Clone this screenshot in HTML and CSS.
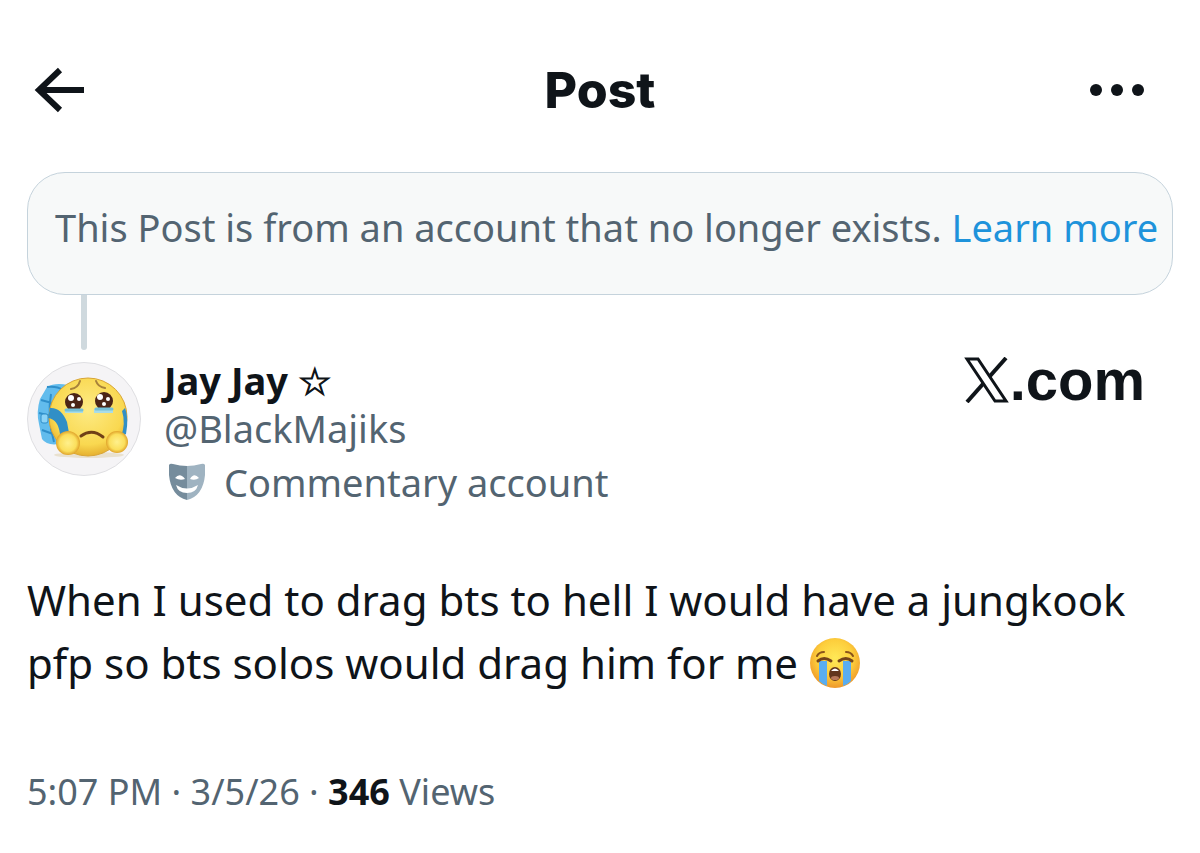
FILE: index.html
```html
<!DOCTYPE html>
<html lang="en">
<head>
  <meta charset="utf-8">
  <meta name="viewport" content="width=device-width, initial-scale=1">
  <title>Post</title>
  <link rel="stylesheet" href="styles.css">
</head>
<body>

  <header class="topbar">
    <button type="button" class="icon-btn" aria-label="Back">
      <svg width="52" height="48" viewBox="0 0 52 48" fill="none" stroke="#0f1419" stroke-width="6">
        <path d="M27 4 L6 24 L27 44 M6 24 H51"/>
      </svg>
    </button>
    <h1 class="title">Post</h1>
    <button type="button" class="icon-btn more-btn" aria-label="More">
      <svg width="56" height="48" viewBox="0 0 56 48" fill="#0f1419">
        <circle cx="7" cy="24" r="6"/>
        <circle cx="28" cy="24" r="6"/>
        <circle cx="49" cy="24" r="6"/>
      </svg>
    </button>
  </header>

  <main class="thread">
    <div class="notice">
      This Post is from an account that no longer exists. <a href="#">Learn more</a>
    </div>
    <div class="connector"></div>

    <article class="post">
      <div class="author">
        <svg class="avatar" viewBox="0 0 114 114" role="img" aria-label="Jay Jay">
          <defs>
            <radialGradient id="face" cx="50%" cy="40%" r="65%">
              <stop offset="0" stop-color="#fdeb85"/>
              <stop offset="0.7" stop-color="#f9d850"/>
              <stop offset="1" stop-color="#dfa224"/>
            </radialGradient>
            <radialGradient id="hand">
              <stop offset="0" stop-color="#fff08c"/>
              <stop offset="0.7" stop-color="#fbdf5c"/>
              <stop offset="1" stop-color="#e0a42b"/>
            </radialGradient>
          </defs>
          <circle cx="57" cy="57" r="56.5" fill="#f5f4f6" stroke="#dfdfe2"/>
          <!-- backpack -->
          <path d="M20 25 Q28 20 41 23 L32 82 Q20 84 15 77 L12 62 Q9 50 13 37 Z" fill="#62bced"/>
          <path d="M20 25 Q30 24 36 28 M14 38 L25 41 M12 51 L24 54 M15 68 L26 72 M24 32 Q20 55 27 80" fill="none" stroke="#2f8fca" stroke-width="2"/>
          <rect x="14" y="52" width="7" height="9" rx="2" fill="#8bd3f7" stroke="#2f8fca"/>
          <ellipse cx="62" cy="93" rx="35" ry="3" fill="#e9e1cf"/>
          <!-- head -->
          <ellipse cx="61" cy="55" rx="39" ry="39" fill="url(#face)" stroke="#d9a533" stroke-width="1"/>
          <path d="M23 46 Q34 45 40 60 L42 71 L33 72 Q31 57 21 56 Z" fill="#318fc6"/>
          <path d="M98 46 Q102 56 99 72 L94 75 Q99 61 95 49 Z" fill="#318fc6"/>
          <path d="M44 27 Q51 26 53 19 M69 19 Q71 25 78 26" fill="none" stroke="#a8823a" stroke-width="2" stroke-linecap="round"/>
          <path d="M38 47 H56 V51 H38 Z M67 47 H86 V51 H67 Z" fill="#a9dce6"/>
          <circle cx="47" cy="40" r="9" fill="#4b2416"/>
          <circle cx="77" cy="39" r="9" fill="#4b2416"/>
          <g fill="#fff">
            <circle cx="44" cy="36" r="3"/>
            <circle cx="52" cy="37" r="2"/>
            <circle cx="46" cy="43" r="2"/>
            <circle cx="73" cy="35" r="3"/>
            <circle cx="81" cy="37" r="2"/>
            <circle cx="77" cy="42" r="2"/>
          </g>
          <path d="M39 48 H55 M69 47 H85" fill="none" stroke="#74bfd8" stroke-width="3" stroke-linecap="round"/>
          <path d="M54 74 Q65 66 76 75" fill="none" stroke="#704017" stroke-width="3" stroke-linecap="round"/>
          <circle cx="41" cy="81" r="12" fill="url(#hand)"/>
          <circle cx="90" cy="80" r="11" fill="url(#hand)"/>
        </svg>
        <div class="names">
          <div class="name">Jay Jay <span class="star">☆</span></div>
          <div class="handle">@BlackMajiks</div>
          <div class="label">
            <svg width="38" height="40" viewBox="0 0 38 40" aria-hidden="true">
              <path d="M1 3 Q2 1 5 2 Q12 4 19 4 V38 Q3 34 1 13 Z" fill="#758c9c"/>
              <path d="M37 3 Q36 1 33 2 Q26 4 19 4 V38 Q35 34 37 13 Z" fill="#9fb3c1"/>
              <path d="M7 16 Q12 10 17 17 Q12 19 7 16 Z M22 17 Q26 10 31 16 Q27 19 22 17 Z M8 23 Q19 30 30 23 Q28 31 19 31 Q10 31 8 23 Z" fill="#fff"/>
            </svg>
            <span>Commentary account</span>
          </div>
        </div>
        <div class="brand">
          <svg width="46" height="46" viewBox="0 0 46 46" role="img" aria-label="X">
            <path d="M42 1 L3 45" stroke="#0f1419" stroke-width="4"/>
            <path d="M3 2 H14 L42 44 H31 Z" fill="#fff" stroke="#0f1419" stroke-width="3"/>
          </svg>
          <span>.com</span>
        </div>
      </div>

      <p class="text">When I used to drag bts to hell I would have a jungkook pfp so bts solos would drag him for me
        <svg class="emoji" viewBox="0 0 52 52" role="img" aria-label="Loudly crying face">
          <defs>
            <radialGradient id="cry" cx="50%" cy="40%" r="60%">
              <stop offset="0" stop-color="#ffe957"/>
              <stop offset="0.6" stop-color="#fdce3c"/>
              <stop offset="1" stop-color="#ee972a"/>
            </radialGradient>
          </defs>
          <circle cx="26" cy="26" r="25" fill="url(#cry)"/>
          <path d="M10 24 H18 V49 Q13 47 10 44 Z M34 24 H42 V44 Q38 48 34 49 Z" fill="#59adf0"/>
          <path d="M9 24 Q15 19 22 24 M30 24 Q37 19 43 24" fill="none" stroke="#75451a" stroke-width="3" stroke-linecap="round"/>
          <path d="M8 19 Q10 15 15 15 M37 15 Q42 15 44 19" fill="none" stroke="#8a541b" stroke-width="2" stroke-linecap="round"/>
          <ellipse cx="26" cy="37" rx="6" ry="7" fill="#62351c"/>
          <path d="M22 34 Q26 29 30 34 Z" fill="#fff"/>
          <ellipse cx="26" cy="41" rx="4" ry="2" fill="#b77759"/>
        </svg>
      </p>

      <div class="meta">5:07 PM · 3/5/26 · <strong>346</strong> Views</div>
    </article>
  </main>

</body>
</html>
```
FILE: styles.css
```css
* {
  box-sizing: border-box;
}

body {
  margin: 0;
  background-color: #ffffff;
  color: #0f1419;
  font-family: "Noto Sans", sans-serif;
}

.topbar {
  display: grid;
  grid-template-columns: 1fr auto 1fr;
  align-items: center;
  padding: 58px 33px 0;
}

.icon-btn {
  display: flex;
  justify-self: start;
  padding: 0;
  border: none;
  background: none;
  cursor: pointer;
}

.more-btn {
  justify-self: end;
  margin-right: 22px;
}

.title {
  margin: 0;
  font-family: Inter, sans-serif;
  font-size: 50px;
  font-weight: 800;
  line-height: 64px;
}

.thread {
  padding: 50px 27px 0;
}

.notice {
  padding: 30px 12px 43px 27px;
  border: 1px solid #c5d3dc;
  border-radius: 38px;
  background-color: #f7f9f9;
  color: #536471;
  font-size: 38px;
  line-height: 48px;
}

.notice a {
  color: #1e93db;
  text-decoration: none;
}

.connector {
  width: 6px;
  height: 55px;
  margin-left: 54px;
  border-radius: 0 0 3px 3px;
  background-color: #cfd9de;
}

.author {
  display: flex;
  align-items: flex-start;
  padding-top: 6px;
}

.avatar {
  flex: none;
  width: 114px;
  height: 114px;
  margin-top: 6px;
}

.names {
  flex: 1;
  margin-left: 23px;
  color: #536471;
  font-size: 38px;
  line-height: 48px;
}

.name {
  color: #0f1419;
  font-weight: 700;
}

.star {
  font-family: "DejaVu Sans", sans-serif;
  line-height: 1;
  -webkit-text-stroke: 1px #0f1419;
}

.label {
  display: flex;
  align-items: center;
  gap: 18px;
  margin-top: 6px;
  padding-left: 4px;
}

.brand {
  display: flex;
  align-items: center;
  padding-right: 28px;
  font-family: "Liberation Sans", sans-serif;
  font-size: 58px;
  font-weight: 700;
  line-height: 48px;
}

.text {
  margin: 62px 0 0;
  font-size: 42px;
  line-height: 63px;
}

.emoji {
  width: 52px;
  height: 52px;
  vertical-align: -10px;
}

.meta {
  margin-top: 74px;
  color: #536471;
  font-size: 36px;
  line-height: 48px;
}

.meta strong {
  color: #0f1419;
}
```
